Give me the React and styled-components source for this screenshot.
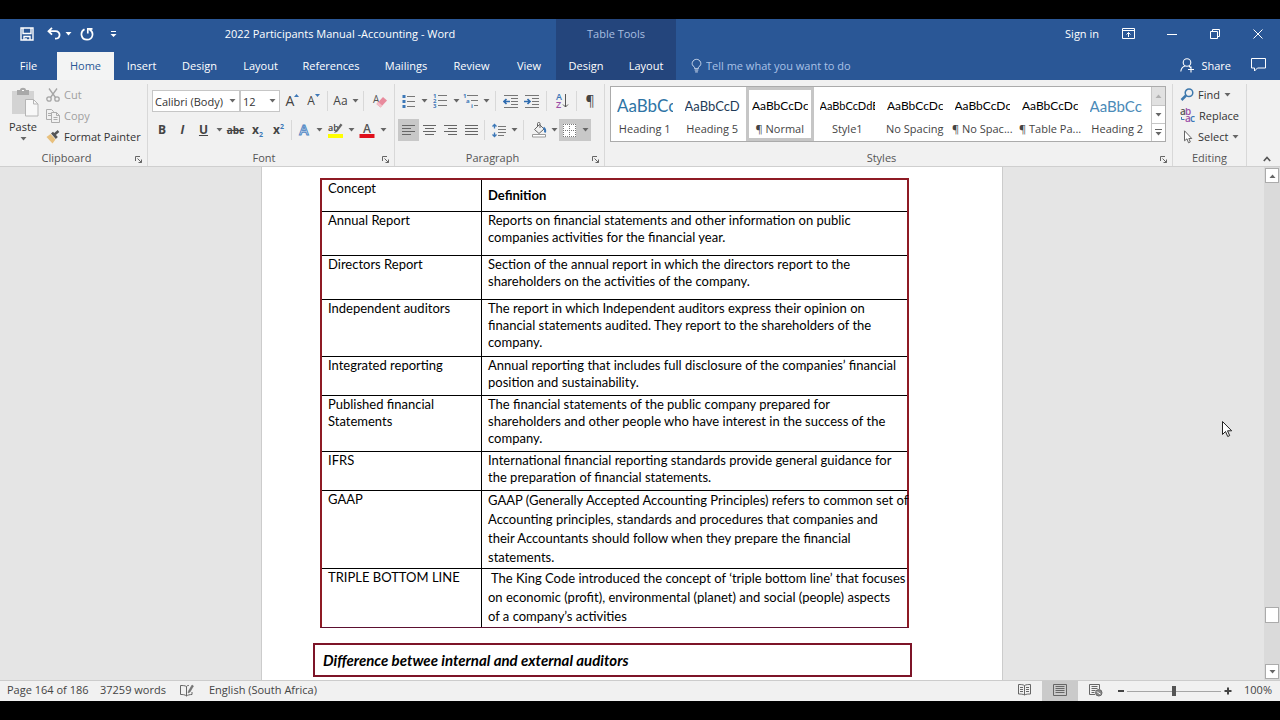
import React from 'react';
import styled, { createGlobalStyle } from 'styled-components';

const GlobalStyle = createGlobalStyle`
    * {
        box-sizing: border-box;
    }

    body {
        margin: 0;
        background: #000000;
        font-family: 'Open Sans', 'Noto Sans', sans-serif;
        font-size: 11px;
        color: #333333;
    }

    button, select, input {
        font: inherit;
        color: inherit;
    }

    svg {
        display: block;
        flex: none;
    }
`;

const Window = styled.div`
    display: flex;
    flex-direction: column;
    height: 100vh;
    padding: 19px 0;
`;

/* ---------- title bar and tabs ---------- */

const Header = styled.header`
    background: #2a5796;
    color: #ffffff;
`;

const TitleBar = styled.div`
    display: flex;
    height: 33px;
`;

const TitleLeft = styled.div`
    display: flex;
    align-items: center;
    width: 556px;
    padding: 0 0 4px 20px;
`;

const QuickAccess = styled.div`
    display: flex;
    align-items: center;
    width: 104px;
`;

const QuickButton = styled.button`
    display: flex;
    align-items: center;
    justify-content: center;
    width: ${(p) => p.$w}px;
    height: 24px;
    margin-right: ${(p) => p.$gap || 0}px;
    padding: 0;
    border: 0;
    background: transparent;
    color: #ffffff;
`;

const DocTitle = styled.div`
    flex: 1;
    text-align: center;
    white-space: nowrap;
`;

const ContextTitle = styled.div`
    width: 120px;
    padding: 7px 0 0;
    background: #24457c;
    color: #a9bfe0;
    text-align: center;
`;

const WindowControls = styled.div`
    display: flex;
    align-items: center;
    margin-left: auto;
    padding: 0 1px 4px 0;
`;

const SignIn = styled.button`
    margin-right: 8px;
    padding: 0;
    border: 0;
    background: transparent;
    color: #ffffff;
    white-space: nowrap;
`;

const ControlButton = styled(QuickButton)`
    width: 43px;
`;

const TabBar = styled.nav`
    display: flex;
    height: 28px;
`;

const Tab = styled.button`
    width: ${(p) => p.$w}px;
    padding: 0 0 2px;
    border: 0;
    background: ${(p) => (p.$active ? '#f3f4f4' : p.$context ? '#24457c' : 'transparent')};
    color: ${(p) => (p.$active ? '#2a5796' : '#ffffff')};
    white-space: nowrap;
`;

const TellMe = styled.label`
    display: flex;
    align-items: center;
    gap: 4px;
    padding: 0 0 2px 15px;

    input {
        width: 180px;
        padding: 0;
        border: 0;
        background: transparent;
    }

    input::placeholder {
        color: #a9c1e6;
        opacity: 1;
    }
`;

const TabActions = styled.div`
    display: flex;
    align-items: center;
    gap: 20px;
    margin-left: auto;
    padding: 0 14px 2px 0;
`;

const ActionButton = styled.button`
    display: flex;
    align-items: center;
    gap: 6px;
    padding: 0;
    border: 0;
    background: transparent;
    color: #ffffff;
`;

/* ---------- ribbon ---------- */

const Ribbon = styled.div`
    display: flex;
    height: 87px;
    padding-top: 4px;
    background: #f1f1f1;
    border-bottom: 1px solid #cfcfcf;
`;

const Group = styled.section`
    display: flex;
    flex-direction: column;
    flex: ${(p) => (p.$w ? 'none' : '1')};
    width: ${(p) => (p.$w ? `${p.$w}px` : 'auto')};
    min-width: 0;
    height: 82px;
    border-right: 1px solid #d8d8d8;
`;

const GroupBody = styled.div`
    flex: 1;
    min-height: 0;
    padding: ${(p) => p.$pad || '0'};
`;

const GroupFooter = styled.div`
    display: flex;
    align-items: center;
    height: 16px;
    color: #555555;
    line-height: 16px;
    text-align: center;
    white-space: nowrap;
`;

const GroupName = styled.span`
    flex: 1;
`;

const Launcher = styled.button`
    display: flex;
    width: 14px;
    padding: 2px 0 0 1px;
    border: 0;
    background: transparent;
`;

const ClipboardBody = styled.div`
    display: flex;
`;

const PasteButton = styled.button`
    display: flex;
    flex-direction: column;
    align-items: center;
    width: 46px;
    padding: 3px 0 0;
    border: 0;
    background: transparent;
    line-height: 20px;

    svg:first-child {
        margin-left: 4px;
    }
`;

const Stack = styled.div`
    display: flex;
    flex-direction: column;
`;

const RowButton = styled.button`
    display: flex;
    align-items: center;
    gap: 4px;
    height: 21px;
    padding: 0;
    border: 0;
    background: transparent;
    color: ${(p) => (p.$off ? '#a0a0a0' : '#333333')};
    white-space: nowrap;
`;

const ToolRow = styled.div`
    display: flex;
    align-items: center;
    height: 22px;
    margin-bottom: 7px;
`;

const Tool = styled.button`
    display: flex;
    align-items: center;
    justify-content: center;
    width: ${(p) => p.$w || 21}px;
    height: 22px;
    padding: 0;
    border: 0;
    background: ${(p) => (p.$on ? '#c8c8c8' : 'transparent')};
    color: #444444;
    font-size: ${(p) => p.$size || 12}px;
    font-weight: ${(p) => (p.$bold ? 700 : 400)};
    font-style: ${(p) => (p.$italic ? 'italic' : 'normal')};
    text-decoration: ${(p) => p.$line || 'none'};
    line-height: 20px;

    sub, sup {
        color: #3d78b8;
        font-size: 7px;
        line-height: 7px;
    }
`;

const Divider = styled.span`
    width: 1px;
    height: 20px;
    margin: 0 ${(p) => p.$m || 3}px;
    background: #d8d8d8;
`;

const Picker = styled.label`
    position: relative;
    width: ${(p) => p.$w}px;
    height: 22px;
    margin-right: ${(p) => p.$gap || 0}px;

    select {
        width: 100%;
        height: 22px;
        padding: 0 2px;
        border: 1px solid #c6c6c6;
        border-radius: 0;
        background: #ffffff;
        appearance: none;
    }

    svg {
        position: absolute;
        top: 9px;
        right: 4px;
        pointer-events: none;
    }
`;

const Gallery = styled.div`
    display: flex;
    height: 56px;
    border: 1px solid #ababab;
    background: #ffffff;
`;

const GalleryItems = styled.div`
    display: grid;
    grid-template-columns: repeat(8, 1fr);
    flex: 1;
    min-width: 0;
`;

const StyleCard = styled.button`
    min-width: 0;
    padding: 0;
    border: 3px solid ${(p) => (p.$on ? '#c6c6c6' : 'transparent')};
    background: transparent;
    overflow: hidden;
`;

const Preview = styled.span`
    display: block;
    height: 30px;
    margin: 0 3px;
    overflow: hidden;
    color: ${(p) => p.$color || '#000000'};
    font-family: Lato, sans-serif;
    font-size: ${(p) => p.$size}px;
    line-height: 30px;
    text-align: left;
    white-space: nowrap;
`;

const StyleName = styled.span`
    display: block;
    color: #444444;
    line-height: 16px;
    text-align: center;
    white-space: nowrap;
`;

const GalleryScroll = styled.div`
    display: grid;
    grid-template-rows: 19px 18px 1fr;
    width: 14px;
    border-left: 1px solid #c6c6c6;
`;

const GalleryArrow = styled.button`
    display: flex;
    align-items: center;
    justify-content: center;
    padding: 0;
    border: 0;
    border-bottom: 1px solid #c6c6c6;
    background: ${(p) => (p.$off ? '#e1e1e1' : '#ffffff')};

    &:last-child {
        border-bottom: 0;
    }
`;

const RibbonEnd = styled.div`
    display: flex;
    align-items: flex-end;
    justify-content: flex-end;
    width: 33px;
    padding: 0 9px 4px 0;
`;

const PlainButton = styled.button`
    display: flex;
    padding: 0;
    border: 0;
    background: transparent;
`;

/* ---------- document ---------- */

const Workspace = styled.main`
    display: flex;
    flex: 1;
    min-height: 0;
    background: #e5e5e5;
`;

const Canvas = styled.div`
    display: flex;
    justify-content: center;
    flex: 1;
    min-width: 0;
    overflow: hidden;
`;

const Page = styled.article`
    width: 742px;
    padding: 11px 90px 0 51px;
    border: solid #cccccc;
    border-width: 0 1px;
    background: #ffffff;
    color: #000000;
    font-family: Lato, sans-serif;
    font-size: 13px;
`;

const ConceptTable = styled.table`
    width: 589px;
    margin-left: 7px;
    border: 2px solid #8e1a24;
    border-bottom: 1px solid #5c1030;
    border-collapse: separate;
    border-spacing: 0;
    table-layout: fixed;

    tr > * {
        border-bottom: 1px solid #000000;
    }

    tbody tr:last-child > * {
        border-bottom: 0;
    }
`;

const Row = styled.tr`
    height: ${(p) => p.$h}px;
    line-height: ${(p) => p.$lh || 17}px;
`;

const Term = styled.td`
    width: 160px;
    padding: 0 6px;
    border-right: 1px solid #000000;
    line-height: 17px;
    vertical-align: top;
    white-space: pre;
`;

const Meaning = styled.td`
    padding: 0 0 0 6px;
    vertical-align: top;
    white-space: pre;
`;

const HeadTerm = styled(Term).attrs({ as: 'th' })`
    font-weight: 400;
    text-align: left;
`;

const HeadMeaning = styled(Meaning).attrs({ as: 'th' })`
    text-align: left;
    vertical-align: middle;
`;

const SectionTitle = styled.h2`
    margin: 15px 0 0;
    padding: 0 8px;
    border: 2px solid #7d1428;
    font-size: 15px;
    font-style: italic;
    font-weight: 700;
    line-height: 30px;
    white-space: nowrap;
`;

const ScrollBar = styled.div`
    display: flex;
    flex-direction: column;
    align-items: center;
    width: 16px;
    padding: 1px 0;
    background: #dadada;
`;

const ScrollButton = styled.button`
    display: flex;
    align-items: center;
    justify-content: center;
    width: 14px;
    height: 15px;
    padding: 0;
    border: 1px solid #ababab;
    background: #ffffff;
`;

const ScrollThumb = styled.div`
    width: 14px;
    height: 16px;
    margin: auto 0 41px;
    border: 1px solid #ababab;
    background: #ffffff;
`;

const Pointer = styled.svg`
    position: absolute;
    top: 420px;
    right: 47px;
`;

/* ---------- status bar ---------- */

const StatusBar = styled.footer`
    display: flex;
    align-items: center;
    height: 21px;
    padding: 0 8px 0 7px;
    border-top: 1px solid #cccccc;
    background: #f1f1f1;
    color: #444444;
    line-height: 18px;
    white-space: nowrap;
`;

const StatusItem = styled.span`
    width: ${(p) => p.$w}px;
    padding-bottom: 2px;
`;

const ViewButton = styled.button`
    display: flex;
    align-items: center;
    justify-content: center;
    width: 36px;
    height: 20px;
    padding: 0 0 2px;
    border: 0;
    background: ${(p) => (p.$on ? '#cacaca' : 'transparent')};
`;

const ViewTools = styled.div`
    display: flex;
    align-items: center;
    margin-left: auto;
`;

const ZoomRange = styled.input`
    width: 94px;
    height: 12px;
    margin: 0 3px;
    background: linear-gradient(#a6a6a6, #a6a6a6) center / 100% 1px no-repeat;
    appearance: none;

    &::-webkit-slider-thumb {
        width: 4px;
        height: 10px;
        background: #555555;
        appearance: none;
    }
`;

const ZoomLevel = styled(StatusItem)`
    text-align: right;
`;

/* ---------- icons ---------- */

const Caret = ({ color = '#666666', up }) => (
    <svg width="7" height="4" viewBox="0 0 7 4">
        <path d={up ? 'M0.5 4h6L3.5 0.5z' : 'M0.5 0h6L3.5 3.5z'} fill={color} />
    </svg>
);

const LauncherIcon = () => (
    <svg width="9" height="9" viewBox="0 0 9 9" fill="none" stroke="#666666">
        <path d="M1.5 6V1.5H6M3.5 3.5l4 4M7.5 4.5v3h-3" />
    </svg>
);

const SaveIcon = () => (
    <svg width="14" height="14" viewBox="0 0 14 14" fill="none" stroke="#fff" strokeWidth="1.4">
        <path d="M1 1h12v12H1zM3 1v5.5h8V1M4 13V9.5h6V13" />
        <path d="M6 11v2" />
    </svg>
);

const UndoIcon = () => (
    <svg width="14" height="13" viewBox="0 0 14 13" fill="none" stroke="#fff" strokeWidth="1.8">
        <path d="M5 0.8L1.5 4.2 5 7.6M1.8 4.2H8.5c5.5 0 5.5 7.5-0.5 7.5" />
    </svg>
);

const RedoIcon = () => (
    <svg width="14" height="14" viewBox="0 0 14 14" fill="none" stroke="#fff" strokeWidth="1.7">
        <path d="M4.5 2.2C-0.5 5 1 12.7 7 12.7c6 0 7.500-7.500 2.500-10.200M7.800 6.500V1.800H12.500" />
    </svg>
);

const CustomizeIcon = () => (
    <svg width="7" height="8" viewBox="0 0 7 8" fill="#fff">
        <path d="M1 1h5v1H1zM0.5 4h6L3.5 7z" />
    </svg>
);

const RibbonOptionsIcon = () => (
    <svg width="13" height="11" viewBox="0 0 13 11" fill="none" stroke="#fff">
        <path d="M0.5 0.5h12v10H0.5zM0.5 2.5h12M6.5 9V4.5M4.5 6.5l2-2 2 2" />
    </svg>
);

const MinimizeIcon = () => (
    <svg width="10" height="10" viewBox="0 0 10 10" stroke="#fff">
        <path d="M0 5.5h10" />
    </svg>
);

const RestoreIcon = () => (
    <svg width="10" height="10" viewBox="0 0 10 10" fill="none" stroke="#fff">
        <path d="M0.5 2.5h7v7h-7zM2.5 2.5v-2h7v7h-2" />
    </svg>
);

const CloseIcon = () => (
    <svg width="10" height="10" viewBox="0 0 10 10" stroke="#fff">
        <path d="M0.5 0.5l9 9M9.5 0.5l-9 9" />
    </svg>
);

const BulbIcon = () => (
    <svg width="11" height="15" viewBox="0 0 12 15" fill="none" stroke="#d5e0f2">
        <path d="M4 11V9.5C1 7.5 1 5.5 1.5 4 3-0.3 9-0.3 10.5 4c0.5 1.5 0.5 3.5-2.500 5.500V11zM4 12.500h4M4.500 14.500h3" />
    </svg>
);

const ShareIcon = () => (
    <svg width="15" height="15" viewBox="0 0 15 15" fill="none" stroke="#fff" strokeWidth="1.1">
        <circle cx="7" cy="4.5" r="3.8" />
        <path d="M0.8 13.5C1.2 10 3 8.5 5.2 8M9 8l1.5 1.5M11 8.5v6M8 11.5h6" />
    </svg>
);

const CommentIcon = () => (
    <svg width="15" height="14" viewBox="0 0 15 14" fill="none" stroke="#fff">
        <path d="M0.5 0.5h14V10h-8l-3 3v-3h-3z" />
    </svg>
);

const PasteIcon = () => (
    <svg width="28" height="30" viewBox="0 0 28 30">
        <path d="M1 4h22v23H1z" fill="#d3d3d3" />
        <path d="M6 3h3c0-3 6-3 6 0h3v5H6z" fill="#a9a9a9" />
        <path d="M11 3.5h2" stroke="#fff" />
        <path d="M14.5 12.5h8l4.500 4.500v12H14.500z" fill="#f8f8f8" stroke="#b5b5b5" />
        <path d="M22.5 12.5V17H27" fill="none" stroke="#b5b5b5" />
    </svg>
);

const CutIcon = () => (
    <svg width="14" height="14" viewBox="0 0 14 14" fill="none" stroke="#a6a6a6" strokeWidth="1.3">
        <path d="M3 0.5l6.500 9M11 0.5l-6.500 9" />
        <circle cx="3" cy="11" r="2.2" />
        <circle cx="11" cy="11" r="2.2" />
    </svg>
);

const CopyIcon = () => (
    <svg width="14" height="14" viewBox="0 0 14 14" fill="#f1f1f1" stroke="#adadad">
        <path d="M0.5 0.5h5l2 2v8h-7zM2 4.5h3M2 6.5h3" />
        <path d="M5.5 3.5h5l3 3v7h-8zM10.5 3.5v3h3M7.5 8.5h4M7.5 10.5h4" />
    </svg>
);

const PainterIcon = () => (
    <svg width="14" height="14" viewBox="0 0 14 14">
        <path d="M0.5 7l4-3 5 5.5-3 4z" fill="#e8c07d" />
        <path d="M5 3.5l2-1.7L11.8 7l-2 2z" fill="#555" />
        <path d="M8.5 4.5l4-3.5" stroke="#555" strokeWidth="2.5" />
    </svg>
);

const GlyphSvg = styled.svg`
    align-self: flex-start;
    margin-top: 4px;
`;

const GlyphArrow = ({ down }) => (
    <GlyphSvg width="5" height="4" viewBox="0 0 5 4" fill="#3d78b8">
        <path d={down ? 'M0 0h5L2.5 3z' : 'M0 3h5L2.5 0z'} />
    </GlyphSvg>
);

const EraserIcon = () => (
    <svg width="15" height="15" viewBox="0 0 15 15">
        <text x="1" y="9" fontSize="10" fill="#555">A</text>
        <path d="M4.5 10l6.500-7 4 3.500-6.500 7z" fill="#e88a9c" />
        <path d="M4.5 10l1.800-1.900 4 3.500L8.500 13.500z" fill="#f3bcc6" />
    </svg>
);

const TextEffectIcon = () => (
    <svg width="14" height="16" viewBox="0 0 14 16">
        <text x="7" y="13" textAnchor="middle" fontSize="14" fontWeight="600" fill="#fff" stroke="#4f86c4" strokeWidth="1">A</text>
    </svg>
);

const HighlightIcon = () => (
    <svg width="16" height="16" viewBox="0 0 16 16">
        <text x="1" y="9" fontSize="9" fontWeight="600" fill="#444">ab</text>
        <path d="M7 11l6.500-9.500L15.500 3 10 10z" fill="#666" />
        <path d="M1 12h15v4H1z" fill="#ffff00" />
    </svg>
);

const FontColorIcon = () => (
    <svg width="16" height="16" viewBox="0 0 16 16">
        <text x="8" y="11" textAnchor="middle" fontSize="12" fontWeight="600" fill="#555">A</text>
        <path d="M0.5 12h15v4h-15z" fill="#e0101c" />
    </svg>
);

const BulletsIcon = () => (
    <svg width="14" height="15" viewBox="0 0 14 15">
        <path d="M0.500 1h3v3h-3zM0.500 6h3v3h-3zM0.500 11h3v3h-3z" fill="#3d78b8" />
        <path d="M5 2.5h8M5 7.5h8M5 12.5h8" stroke="#777" />
    </svg>
);

const NumberingIcon = () => (
    <svg width="14" height="16" viewBox="0 0 14 16">
        <g fontSize="6" fontWeight="700" fill="#3d78b8">
            <text x="0" y="5">1</text>
            <text x="0" y="10">2</text>
            <text x="0" y="15">3</text>
        </g>
        <path d="M5 2.5h9M5 7.5h9M5 12.5h9" stroke="#777" />
    </svg>
);

const MultilevelIcon = () => (
    <svg width="16" height="16" viewBox="0 0 16 16">
        <g fontSize="6" fontWeight="700" fill="#3d78b8">
            <text x="0" y="5">1</text>
            <text x="3" y="10">a</text>
            <text x="8" y="15">i</text>
        </g>
        <path d="M4 2.5h11M8 7.5h7M11 12.5h4" stroke="#777" />
    </svg>
);

const IndentIcon = ({ right }) => (
    <svg width="16" height="13" viewBox="0 0 16 13" fill="none">
        <path d="M1 0.5h14M8 3.5h7M8 6.5h7M8 9.5h7M1 12.5h14" stroke="#777" />
        <path
            d={right ? 'M0 6.5h5.500M3.500 4L6 6.500 3.500 9' : 'M7 6.500H1.500M3.500 4L1 6.500 3.500 9'}
            stroke="#2f6cb0"
            strokeWidth="1.700"
        />
    </svg>
);

const SortIcon = () => (
    <svg width="14" height="16" viewBox="0 0 14 16">
        <text x="1" y="7" fontSize="9" fontWeight="600" fill="#3d78b8">A</text>
        <text x="1" y="15" fontSize="9" fontWeight="600" fill="#9b4fa8">Z</text>
        <path d="M10.5 1v13M8 11.5l2.500 2.500 2.500-2.500" fill="none" stroke="#555" />
    </svg>
);

const alignPaths = {
    left: 'M0 0.5h13M0 3.5h9M0 6.5h13M0 9.5h9',
    center: 'M0 0.5h13M2 3.5h9M0 6.5h13M2 9.5h9',
    right: 'M0 0.5h13M4 3.5h9M0 6.5h13M4 9.5h9',
    justify: 'M0 0.5h13M0 3.5h13M0 6.5h13M0 9.5h13',
};

const AlignIcon = ({ kind }) => (
    <svg width="13" height="10" viewBox="0 0 13 10" stroke="#666">
        <path d={alignPaths[kind]} />
    </svg>
);

const SpacingIcon = () => (
    <svg width="14" height="15" viewBox="0 0 14 15" fill="none">
        <path d="M2.5 1.5v4M2.5 9.5v4M0.5 3.5l2-2 2 2M0.5 11.5l2 2 2-2" stroke="#3d78b8" strokeWidth="1.3" />
        <path d="M6 3.5h8M6 6.5h8M6 9.5h8M6 12.5h6" stroke="#777" />
    </svg>
);

const ShadingIcon = () => (
    <svg width="16" height="16" viewBox="0 0 16 16" fill="none" stroke="#666">
        <path d="M3.5 7.5l5-5L13 7l-5 4.500zM6.500 5V1.500c0-1.500 2.500-1.500 2.500 0V6" />
        <path d="M12.500 5.500c2 1.500 2 3 1.500 5" stroke="#3d78b8" strokeWidth="2" />
        <path d="M1.500 12.500h13V15h-13z" fill="#fff" stroke="#999" />
    </svg>
);

const BordersIcon = () => (
    <svg width="13" height="13" viewBox="0 0 13 13" fill="#fff">
        <path d="M0 0h13v13H0z" />
        <path d="M0.5 0v13M12.5 0v13M0 0.5h13M6.500 0v13M0 6.500h13M0 12.500h13" stroke="#777" strokeDasharray="1 1" />
    </svg>
);

const FindIcon = () => (
    <svg width="14" height="13" viewBox="0 0 14 13" fill="none" stroke="#3f79ad">
        <circle cx="9" cy="4.800" r="3.800" strokeWidth="1.500" />
        <path d="M6 7.500L1.500 12" strokeWidth="2.500" />
    </svg>
);

const ReplaceIcon = () => (
    <svg width="15" height="15" viewBox="0 0 15 15" fontSize="10" fontWeight="600">
        <text x="0" y="7" fill="#555">a</text>
        <text x="5" y="7" fill="#9b4fa8">b</text>
        <text x="5" y="14" fill="#9b4fa8">a</text>
        <text x="10" y="14" fill="#3d78b8">c</text>
        <path d="M1.5 9v2.500h3" fill="none" stroke="#3d78b8" />
    </svg>
);

const SelectIcon = () => (
    <svg width="14" height="14" viewBox="0 0 14 14" fill="#fff" stroke="#666">
        <path d="M4.500 0.800v10l2.500-2 1.500 4 1.800-0.800-1.500-3.500h3z" />
    </svg>
);

const MoreIcon = () => (
    <svg width="7" height="7" viewBox="0 0 7 7" fill="#666">
        <path d="M0 0h7v1H0zM0.500 3h6l-3 3.500z" />
    </svg>
);

const ChevronUp = () => (
    <svg width="8" height="6" viewBox="0 0 8 6" fill="none" stroke="#555" strokeWidth="1.6">
        <path d="M0.8 5L4 1.5 7.2 5" />
    </svg>
);

const ProofIcon = () => (
    <svg width="14" height="13" viewBox="0 0 14 13" fill="none" stroke="#666">
        <path d="M9 1.500c-1 0-2 0-2.500 1C5 1.500 2.500 1.500 0.500 1.500v9c2 0 4.500 0 6 1.500 1-1 3.500-1.500 5.500-1.500V8M6.500 2.500V12" />
        <path d="M8 9l0.500-2L12 1l1.500 1L10 8z" fill="#777" strokeWidth="0.500" />
    </svg>
);

const ReadIcon = () => (
    <svg width="13" height="12" viewBox="0 0 13 12" fill="none" stroke="#666">
        <path d="M6.500 1.500c-1.500-1-4-1-6-1V10c2 0 4.500 0 6 1 1.500-1 4-1 6-1V0.500c-2 0-4.500 0-6 1V11M2 3.500h3M2 5.500h3M2 7.500h3M8 3.500h3M8 5.500h3M8 7.500h3" />
    </svg>
);

const PrintIcon = () => (
    <svg width="14" height="12" viewBox="0 0 14 12" fill="none" stroke="#666">
        <path d="M0.500 0.500h13v11H0.500zM2.500 2.500h9M2.500 4.500h9M2.500 6.500h9M2.500 8.500h9" />
    </svg>
);

const WebIcon = () => (
    <svg width="14" height="13" viewBox="0 0 14 13" fill="none" stroke="#666">
        <path d="M6 10.500H0.500v-10h10V5M2.500 2.500h6M2.500 4.500h6M2.500 6.500h4M2.500 8.500h3" />
        <circle cx="9.800" cy="8.800" r="3.200" fill="#888" />
        <path d="M8 7.500L9.500 9l2 1" stroke="#fff" />
    </svg>
);

const MinusIcon = () => (
    <svg width="10" height="8" viewBox="0 0 10 8" stroke="#444" strokeWidth="2">
        <path d="M4 4h6" />
    </svg>
);

const PlusIcon = () => (
    <svg width="8" height="8" viewBox="0 0 8 8" stroke="#444" strokeWidth="2">
        <path d="M0.5 4h7M4 0.5v7" />
    </svg>
);

/* ---------- content ---------- */

const tabs = [
    { name: 'File', w: 57 },
    { name: 'Home', w: 57, active: true },
    { name: 'Insert', w: 55 },
    { name: 'Design', w: 61 },
    { name: 'Layout', w: 61 },
    { name: 'References', w: 80 },
    { name: 'Mailings', w: 70 },
    { name: 'Review', w: 61 },
    { name: 'View', w: 54 },
    { name: 'Design', w: 60, context: true },
    { name: 'Layout', w: 60, context: true },
];

const cards = [
    { name: 'Heading 1', text: 'AaBbCc', size: 17, color: '#2e74a5' },
    { name: 'Heading 5', text: 'AaBbCcD', size: 13, color: '#1f3b57' },
    { name: '¶ Normal', text: 'AaBbCcDc', size: 12, on: true },
    { name: 'Style1', text: 'AaBbCcDdE', size: 11 },
    { name: 'No Spacing', text: 'AaBbCcDc', size: 12 },
    { name: '¶ No Spac...', text: 'AaBbCcDc', size: 12 },
    { name: '¶ Table Pa...', text: 'AaBbCcDc', size: 12 },
    { name: 'Heading 2', text: 'AaBbCc', size: 15, color: '#4a8ab8' },
];

const concepts = [
    {
        term: 'Annual Report',
        h: 44,
        text: 'Reports on financial statements and other information on public\ncompanies activities for the financial year.',
    },
    {
        term: 'Directors Report',
        h: 44,
        text: 'Section of the annual report in which the directors report to the\nshareholders on the activities of the company.',
    },
    {
        term: 'Independent auditors',
        h: 57,
        text: 'The report in which Independent auditors express their opinion on\nfinancial statements audited. They report to the shareholders of the\ncompany.',
    },
    {
        term: 'Integrated reporting',
        h: 39,
        text: 'Annual reporting that includes full disclosure of the companies’ financial\nposition and sustainability.',
    },
    {
        term: 'Published financial\nStatements',
        h: 56,
        text: 'The financial statements of the public company prepared for\nshareholders and other people who have interest in the success of the\ncompany.',
    },
    {
        term: 'IFRS',
        h: 39,
        text: 'International financial reporting standards provide general guidance for\nthe preparation of financial statements.',
    },
    {
        term: 'GAAP',
        h: 78,
        lh: 19,
        text: 'GAAP (Generally Accepted Accounting Principles) refers to common set of\nAccounting principles, standards and procedures that companies and\ntheir Accountants should follow when they prepare the financial\nstatements.',
    },
    {
        term: 'TRIPLE BOTTOM LINE',
        h: 58,
        lh: 19,
        text: ' The King Code introduced the concept of ‘triple bottom line’ that focuses\non economic (profit), environmental (planet) and social (people) aspects\nof a company’s activities',
    },
];

const RibbonGroup = ({ name, width, pad, launcher = true, children }) => (
    <Group $w={width}>
        <GroupBody $pad={pad}>{children}</GroupBody>
        <GroupFooter>
            <GroupName>{name}</GroupName>
            {launcher && (
                <Launcher aria-label={`${name} settings`}>
                    <LauncherIcon />
                </Launcher>
            )}
        </GroupFooter>
    </Group>
);

const CaretTool = ({ w = 10, label }) => (
    <Tool $w={w} aria-label={label}>
        <Caret />
    </Tool>
);

const TopBar = () => (
    <Header>
        <TitleBar>
            <TitleLeft>
                <QuickAccess>
                    <QuickButton $w={14} $gap={13} aria-label="Save"><SaveIcon /></QuickButton>
                    <QuickButton $w={14} $gap={4} aria-label="Undo"><UndoIcon /></QuickButton>
                    <QuickButton $w={7} $gap={8} aria-label="Undo list"><Caret color="#ffffff" /></QuickButton>
                    <QuickButton $w={14} $gap={16} aria-label="Repeat"><RedoIcon /></QuickButton>
                    <QuickButton $w={7} aria-label="Customize"><CustomizeIcon /></QuickButton>
                </QuickAccess>
                <DocTitle>2022 Participants Manual -Accounting - Word</DocTitle>
            </TitleLeft>
            <ContextTitle>Table Tools</ContextTitle>
            <WindowControls>
                <SignIn>Sign in</SignIn>
                <ControlButton aria-label="Ribbon display options"><RibbonOptionsIcon /></ControlButton>
                <ControlButton aria-label="Minimize"><MinimizeIcon /></ControlButton>
                <ControlButton aria-label="Restore"><RestoreIcon /></ControlButton>
                <ControlButton aria-label="Close"><CloseIcon /></ControlButton>
            </WindowControls>
        </TitleBar>
        <TabBar>
            {tabs.map((t, i) => (
                <Tab key={i} $w={t.w} $active={t.active} $context={t.context}>{t.name}</Tab>
            ))}
            <TellMe>
                <BulbIcon />
                <input type="text" aria-label="Tell me" placeholder="Tell me what you want to do" />
            </TellMe>
            <TabActions>
                <ActionButton><ShareIcon />Share</ActionButton>
                <ActionButton aria-label="Comments"><CommentIcon /></ActionButton>
            </TabActions>
        </TabBar>
    </Header>
);

const FontGroup = () => (
    <RibbonGroup name="Font" width={247} pad="6px 0 0 4px">
        <ToolRow>
            <Picker $w={88}>
                <select aria-label="Font"><option>Calibri (Body)</option></select>
                <Caret />
            </Picker>
            <Picker $w={40} $gap={2}>
                <select aria-label="Font size"><option>12</option></select>
                <Caret />
            </Picker>
            <Tool $size={14} aria-label="Grow font">A<GlyphArrow /></Tool>
            <Tool $size={12} aria-label="Shrink font">A<GlyphArrow down /></Tool>
            <Divider />
            <Tool $w={19}>Aa</Tool>
            <CaretTool label="Change case" />
            <Divider />
            <Tool $w={24} aria-label="Clear formatting"><EraserIcon /></Tool>
        </ToolRow>
        <ToolRow>
            <Tool $w={20} $bold>B</Tool>
            <Tool $bold $italic>I</Tool>
            <Tool $bold $line="underline">U</Tool>
            <CaretTool label="Underline style" />
            <Tool $w={23} $size={10} $bold $line="line-through">abc</Tool>
            <Tool $bold><span>x<sub>2</sub></span></Tool>
            <Tool $bold><span>x<sup>2</sup></span></Tool>
            <Divider $m={2} />
            <Tool $w={20} aria-label="Text effects"><TextEffectIcon /></Tool>
            <CaretTool label="Text effects list" />
            <Tool $w={22} aria-label="Highlight"><HighlightIcon /></Tool>
            <CaretTool label="Highlight list" />
            <Tool $w={22} aria-label="Font color"><FontColorIcon /></Tool>
            <CaretTool label="Font color list" />
        </ToolRow>
    </RibbonGroup>
);

const ParagraphGroup = () => (
    <RibbonGroup name="Paragraph" width={210} pad="6px 0 0 3px">
        <ToolRow>
            <Tool aria-label="Bullets"><BulletsIcon /></Tool>
            <CaretTool label="Bullet list" />
            <Tool $w={22} aria-label="Numbering"><NumberingIcon /></Tool>
            <CaretTool label="Number list" />
            <Tool $w={20} aria-label="Multilevel"><MultilevelIcon /></Tool>
            <CaretTool label="Multilevel list" />
            <Divider $m={4} />
            <Tool aria-label="Decrease indent"><IndentIcon /></Tool>
            <Tool aria-label="Increase indent"><IndentIcon right /></Tool>
            <Divider $m={4} />
            <Tool $w={22} aria-label="Sort"><SortIcon /></Tool>
            <Divider />
            <Tool $w={20} $size={14}>¶</Tool>
        </ToolRow>
        <ToolRow>
            <Tool $on aria-label="Align left"><AlignIcon kind="left" /></Tool>
            <Tool aria-label="Center"><AlignIcon kind="center" /></Tool>
            <Tool aria-label="Align right"><AlignIcon kind="right" /></Tool>
            <Tool $w={20} aria-label="Justify"><AlignIcon kind="justify" /></Tool>
            <Divider />
            <Tool aria-label="Line spacing"><SpacingIcon /></Tool>
            <CaretTool label="Line spacing list" />
            <Divider $m={4} />
            <Tool aria-label="Shading"><ShadingIcon /></Tool>
            <CaretTool label="Shading list" />
            <Tool $on $w={20} aria-label="Borders"><BordersIcon /></Tool>
            <Tool $on $w={12} aria-label="Borders list"><Caret /></Tool>
        </ToolRow>
    </RibbonGroup>
);

const RibbonBar = () => (
    <Ribbon>
        <RibbonGroup name="Clipboard" width={148}>
            <ClipboardBody>
                <PasteButton>
                    <PasteIcon />
                    Paste
                    <Caret />
                </PasteButton>
                <Stack>
                    <RowButton $off><CutIcon />Cut</RowButton>
                    <RowButton $off><CopyIcon />Copy</RowButton>
                    <RowButton><PainterIcon />Format Painter</RowButton>
                </Stack>
            </ClipboardBody>
        </RibbonGroup>
        <FontGroup />
        <ParagraphGroup />
        <RibbonGroup name="Styles" pad="2px 6px 0 5px">
            <Gallery>
                <GalleryItems>
                    {cards.map((c) => (
                        <StyleCard key={c.name} $on={c.on}>
                            <Preview $size={c.size} $color={c.color}>{c.text}</Preview>
                            <StyleName>{c.name}</StyleName>
                        </StyleCard>
                    ))}
                </GalleryItems>
                <GalleryScroll>
                    <GalleryArrow $off aria-label="Previous styles"><Caret up color="#b0b0b0" /></GalleryArrow>
                    <GalleryArrow aria-label="Next styles"><Caret /></GalleryArrow>
                    <GalleryArrow aria-label="More styles"><MoreIcon /></GalleryArrow>
                </GalleryScroll>
            </Gallery>
        </RibbonGroup>
        <RibbonGroup name="Editing" width={74} pad="0 0 0 7px" launcher={false}>
            <RowButton><FindIcon />Find<Caret /></RowButton>
            <RowButton><ReplaceIcon />Replace</RowButton>
            <RowButton><SelectIcon />Select<Caret /></RowButton>
        </RibbonGroup>
        <RibbonEnd>
            <PlainButton aria-label="Collapse ribbon"><ChevronUp /></PlainButton>
        </RibbonEnd>
    </Ribbon>
);

const DocumentPage = () => (
    <Page>
        <ConceptTable>
            <thead>
                <Row $h={32}>
                    <HeadTerm>Concept</HeadTerm>
                    <HeadMeaning>Definition</HeadMeaning>
                </Row>
            </thead>
            <tbody>
                {concepts.map((c) => (
                    <Row key={c.term} $h={c.h} $lh={c.lh}>
                        <Term>{c.term}</Term>
                        <Meaning>{c.text}</Meaning>
                    </Row>
                ))}
            </tbody>
        </ConceptTable>
        <SectionTitle>Difference betwee internal and external auditors</SectionTitle>
    </Page>
);

const App = () => {
    return (
        <Window>
            <GlobalStyle />
            <TopBar />
            <RibbonBar />
            <Workspace>
                <Canvas>
                    <DocumentPage />
                </Canvas>
                <ScrollBar>
                    <ScrollButton aria-label="Scroll up"><Caret up /></ScrollButton>
                    <ScrollThumb />
                    <ScrollButton aria-label="Scroll down"><Caret /></ScrollButton>
                </ScrollBar>
            </Workspace>
            <StatusBar>
                <StatusItem $w={93}>Page 164 of 186</StatusItem>
                <StatusItem $w={80}>37259 words</StatusItem>
                <StatusItem $w={29}><ProofIcon /></StatusItem>
                <StatusItem>English (South Africa)</StatusItem>
                <ViewTools>
                    <ViewButton aria-label="Read mode"><ReadIcon /></ViewButton>
                    <ViewButton $on aria-label="Print layout"><PrintIcon /></ViewButton>
                    <ViewButton aria-label="Web layout"><WebIcon /></ViewButton>
                    <PlainButton aria-label="Zoom out"><MinusIcon /></PlainButton>
                    <ZoomRange type="range" min="0" max="100" defaultValue="50" aria-label="Zoom" />
                    <PlainButton aria-label="Zoom in"><PlusIcon /></PlainButton>
                    <ZoomLevel $w={40}>100%</ZoomLevel>
                </ViewTools>
            </StatusBar>
            <Pointer width="12" height="18" viewBox="0 0 12 18" fill="#fff" stroke="#222">
                <path d="M1.500 1.500v13l3-3 2.200 5 2-0.900-2.200-4.800h4.200z" />
            </Pointer>
        </Window>
    );
};

export default App;
